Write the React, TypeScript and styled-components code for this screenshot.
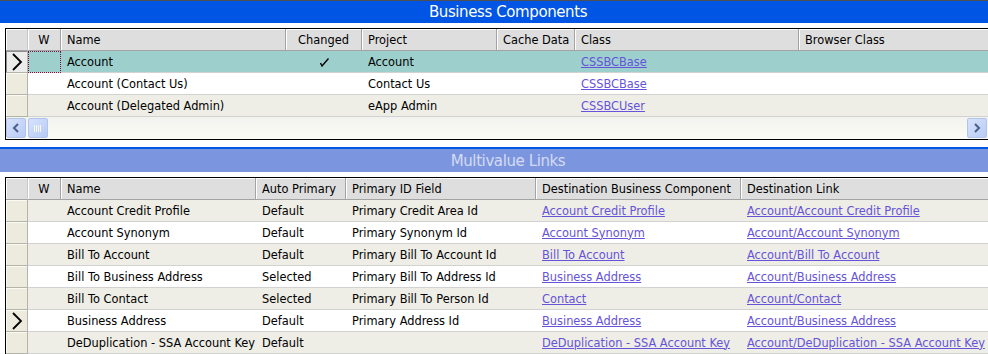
import React from 'react'
import styled, { createGlobalStyle } from 'styled-components'

const GlobalStyle = createGlobalStyle`
  html, body {
    margin: 0;
    padding: 0;
    background: #fff;
  }
  body {
    font-family: 'DejaVu Sans', Verdana, sans-serif;
    font-size: 11.4px;
    color: #000;
  }
`

interface Column {
  label: string
  width: number
  center?: boolean
  link?: boolean
}

type RowKind = 'selected' | 'odd' | 'even'

const Window = styled.div`
  width: 988px;
  height: 354px;
  overflow: hidden;
  box-sizing: border-box;
  border-top: 1px solid #505050;
`

const TitleBar = styled.div<{ $active: boolean }>`
  height: ${p => (p.$active ? '22px' : '23px')};
  display: flex;
  align-items: center;
  justify-content: center;
  padding-left: 28px;
  font-size: 15px;
  letter-spacing: -0.4px;
  background: ${p => (p.$active ? '#0055e5' : '#7b96de')};
  color: ${p => (p.$active ? '#fff' : '#d5dbf2')};
  border-top: ${p => (p.$active ? 'none' : '2px solid #0055e5')};
  margin-top: ${p => (p.$active ? '0' : '7px')};
`

const Frame = styled.div<{ $bottom: boolean }>`
  margin: 5px 0 0 5px;
  width: 983px;
  overflow: hidden;
  border-left: 1px solid #000;
  border-top: 1px solid #000;
  border-bottom: ${p => (p.$bottom ? '1px solid #000' : 'none')};
`

const Table = styled.table`
  border-collapse: separate;
  border-spacing: 0;
  table-layout: fixed;
`

const HeadCell = styled.th<{ $center?: boolean }>`
  height: 22px;
  padding: 0 6px;
  background: #dedede;
  border-right: 1px solid #a3a3a3;
  border-bottom: 1px solid #a3a3a3;
  box-shadow: inset 1px 1px 0 #fff;
  font-weight: normal;
  text-align: ${p => (p.$center ? 'center' : 'left')};
  white-space: nowrap;
  overflow: hidden;
  box-sizing: border-box;
`

const SelectorHead = styled(HeadCell)`
  padding: 0;
  border-right: 1px solid #c9c9c9;
`

const Row = styled.tr<{ $kind: RowKind }>`
  background: ${p =>
    p.$kind === 'selected' ? '#9dcfcc' : p.$kind === 'odd' ? '#eeede6' : '#fff'};
`

const Cell = styled.td<{ $center?: boolean; $focus?: boolean }>`
  height: 22px;
  padding: 0 6px;
  border-bottom: 1px solid #d2d2d2;
  white-space: nowrap;
  overflow: hidden;
  text-align: ${p => (p.$center ? 'center' : 'left')};
  box-sizing: border-box;
  outline: ${p => (p.$focus ? '1px dotted #7a1040' : 'none')};
  outline-offset: -1px;
`

const SelectorCell = styled.td<{ $current: boolean }>`
  height: 22px;
  padding: 0;
  background: ${p => (p.$current ? '#ececea' : '#ecebdd')};
  border-right: 1px solid #b4b4a8;
  border-bottom: 1px solid #b4b4a8;
  box-shadow: inset 1px 1px 0 ${p => (p.$current ? '#8e8e8e' : '#fafaf4')};
  vertical-align: middle;
  box-sizing: border-box;
`

const ArrowBox = styled.div`
  display: flex;
  justify-content: center;
  align-items: center;
`

const Link = styled.a`
  color: #6553d9;
  text-decoration: underline;
  cursor: pointer;
`

const Check = styled.span`
  display: inline-flex;
  vertical-align: middle;
`

const ScrollBar = styled.div`
  height: 22px;
  display: flex;
  align-items: center;
  gap: 2px;
  padding: 0 2px 0 0;
  background: linear-gradient(#f2f2ee, #fcfcf7);
`

const ScrollButton = styled.div`
  width: 20px;
  height: 20px;
  box-sizing: border-box;
  border: 1px solid #b2c4ec;
  border-radius: 2px;
  background: linear-gradient(135deg, #d7e2fc, #b8cbf6);
  display: flex;
  align-items: center;
  justify-content: center;
`

const Thumb = styled(ScrollButton)`
  background:
    linear-gradient(90deg, transparent 5px, #f4f7ff 5px, #f4f7ff 6px, transparent 6px, transparent 7px, #f4f7ff 7px, #f4f7ff 8px, transparent 8px, transparent 9px, #f4f7ff 9px, #f4f7ff 10px, transparent 10px, transparent 11px, #f4f7ff 11px, #f4f7ff 12px, transparent 12px) center / 18px 7px no-repeat,
    linear-gradient(135deg, #d7e2fc, #b8cbf6);
`

const Track = styled.div`
  flex: 1;
`

function RowArrow() {
  return (
    <ArrowBox>
      <svg width="12" height="18" viewBox="0 0 12 18">
        <polyline points="2,1 10,9 2,17" fill="none" stroke="#000" strokeWidth="1.8" />
      </svg>
    </ArrowBox>
  )
}

function CheckMark() {
  return (
    <svg width="10" height="10" viewBox="0 0 10 10">
      <path d="M1.5 6 L3 9 L9.5 1.5" fill="none" stroke="#000" strokeWidth="1.4" />
    </svg>
  )
}

function Chevron({ dir }: { dir: 'left' | 'right' }) {
  const pts = dir === 'left' ? '6,1 2,5 6,9' : '2,1 6,5 2,9'
  return (
    <svg width="8" height="10" viewBox="0 0 8 10">
      <polyline points={pts} fill="none" stroke="#4a6088" strokeWidth="2" />
    </svg>
  )
}

interface GridProps {
  columns: Column[]
  rows: (string | null)[][]
  currentRow: number
  active: boolean
  scroll?: boolean
}

function Grid({ columns, rows, currentRow, active, scroll }: GridProps) {
  const total = 22 + columns.reduce((s, c) => s + c.width, 0)
  return (
    <Frame $bottom={!!scroll}>
      <Table style={{ width: total }}>
        <colgroup>
          <col style={{ width: 22 }} />
          {columns.map(c => (
            <col key={c.label} style={{ width: c.width }} />
          ))}
        </colgroup>
        <thead>
          <tr>
            <SelectorHead />
            {columns.map(c => (
              <HeadCell key={c.label} $center={c.center}>
                {c.label}
              </HeadCell>
            ))}
          </tr>
        </thead>
        <tbody>
          {rows.map((r, i) => {
            const kind: RowKind =
              active && i === currentRow ? 'selected' : i % 2 === 0 ? 'odd' : 'even'
            return (
              <Row key={i} $kind={kind}>
                <SelectorCell $current={active && i === currentRow}>
                  {i === currentRow && <RowArrow />}
                </SelectorCell>
                {columns.map((c, j) => {
                  const v = r[j]
                  return (
                    <Cell
                      key={c.label}
                      $center={c.center}
                      $focus={active && i === currentRow && j === 0}
                    >
                      {v === 'Y' ? (
                        <Check>
                          <CheckMark />
                        </Check>
                      ) : v && c.link ? (
                        <Link>{v}</Link>
                      ) : (
                        v
                      )}
                    </Cell>
                  )
                })}
              </Row>
            )
          })}
        </tbody>
      </Table>
      {scroll && (
        <ScrollBar>
          <ScrollButton>
            <Chevron dir="left" />
          </ScrollButton>
          <Thumb />
          <Track />
          <ScrollButton>
            <Chevron dir="right" />
          </ScrollButton>
        </ScrollBar>
      )}
    </Frame>
  )
}

const componentColumns: Column[] = [
  { label: 'W', width: 33, center: true },
  { label: 'Name', width: 225 },
  { label: 'Changed', width: 76, center: true },
  { label: 'Project', width: 135 },
  { label: 'Cache Data', width: 78, center: true },
  { label: 'Class', width: 224, link: true },
  { label: 'Browser Class', width: 200 },
]

const componentRows = [
  [null, 'Account', 'Y', 'Account', null, 'CSSBCBase', null],
  [null, 'Account (Contact Us)', null, 'Contact Us', null, 'CSSBCBase', null],
  [null, 'Account (Delegated Admin)', null, 'eApp Admin', null, 'CSSBCUser', null],
]

const linkColumns: Column[] = [
  { label: 'W', width: 33, center: true },
  { label: 'Name', width: 195 },
  { label: 'Auto Primary', width: 90 },
  { label: 'Primary ID Field', width: 190 },
  { label: 'Destination Business Component', width: 205, link: true },
  { label: 'Destination Link', width: 260, link: true },
]

const linkRows = [
  [null, 'Account Credit Profile', 'Default', 'Primary Credit Area Id', 'Account Credit Profile', 'Account/Account Credit Profile'],
  [null, 'Account Synonym', 'Default', 'Primary Synonym Id', 'Account Synonym', 'Account/Account Synonym'],
  [null, 'Bill To Account', 'Default', 'Primary Bill To Account Id', 'Bill To Account', 'Account/Bill To Account'],
  [null, 'Bill To Business Address', 'Selected', 'Primary Bill To Address Id', 'Business Address', 'Account/Business Address'],
  [null, 'Bill To Contact', 'Selected', 'Primary Bill To Person Id', 'Contact', 'Account/Contact'],
  [null, 'Business Address', 'Default', 'Primary Address Id', 'Business Address', 'Account/Business Address'],
  [null, 'DeDuplication - SSA Account Key', 'Default', null, 'DeDuplication - SSA Account Key', 'Account/DeDuplication - SSA Account Key'],
]

export default function App() {
  return (
    <>
      <GlobalStyle />
      <Window>
        <TitleBar $active>Business Components</TitleBar>
        <Grid columns={componentColumns} rows={componentRows} currentRow={0} active scroll />
        <TitleBar $active={false}>Multivalue Links</TitleBar>
        <Grid columns={linkColumns} rows={linkRows} currentRow={5} active={false} />
      </Window>
    </>
  )
}
